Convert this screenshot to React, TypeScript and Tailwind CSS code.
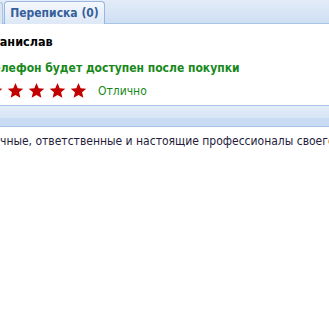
export default function App() {
  const stars = [0, 1, 2, 3, 4];
  return (
    <div className="w-[329px] h-[326px] overflow-hidden bg-white font-['DejaVu_Sans_Condensed','DejaVu_Sans',sans-serif] text-[12px]">
      {/* tab strip */}
      <div className="relative flex h-[24px] items-end border-b border-[#a7c3e6] bg-gradient-to-b from-[#e3ecf8] to-[#cedff3] pl-[4px]">
        <div className="absolute left-0 top-[2px] h-[22px] w-[3px] rounded-tr-[3px] border-r border-t border-[#a9c4e6] bg-[#dbe6f4]" />
        <div className="relative -mb-px flex h-[23px] w-[101px] items-center justify-center rounded-t-[4px] border border-b-0 border-[#98b6df] bg-gradient-to-b from-[#f5f8fd] to-[#dde8f6] font-bold text-[12px] text-[#355f9b]">
          Переписка (0)
        </div>
      </div>

      {/* review */}
      <div className="ml-[-15px] pt-[9px]">
        <div className="font-bold text-[12.5px] text-black">Станислав</div>
        <div className="mt-[7px] ml-[1px] font-bold text-[12px] text-[#17891a]">
          Телефон будет доступен после покупки
        </div>
        <div className="mt-[5px] ml-[1px] flex items-center">
          {stars.map((i) => (
            <svg key={i} width="17" height="17" viewBox="0 0 24 24" className="mr-[4px]">
              <path
                d="M12 1.5l3.1 7.3 7.9.6-6 5.2 1.9 7.7L12 18.2l-6.9 4.1L7 14.6 1 9.4l7.9-.6z"
                fill="#c30000"
              />
            </svg>
          ))}
          <span className="ml-[7px] text-[12px] text-[#17891a]">Отлично</span>
        </div>
      </div>

      {/* section bar */}
      <div className="mt-[5px] flex h-[22px] flex-col border-y border-[#a7c3e6]">
        <div className="h-[12px] bg-gradient-to-b from-[#e4edf8] to-[#d6e4f5]" />
        <div className="flex-1 bg-[#c9dbf2]" />
      </div>

      <div className="mt-[5px] whitespace-nowrap text-[12px] text-[#241c3c]">
        чные, ответственные и настоящие профессионалы своего дела
      </div>
    </div>
  );
}
